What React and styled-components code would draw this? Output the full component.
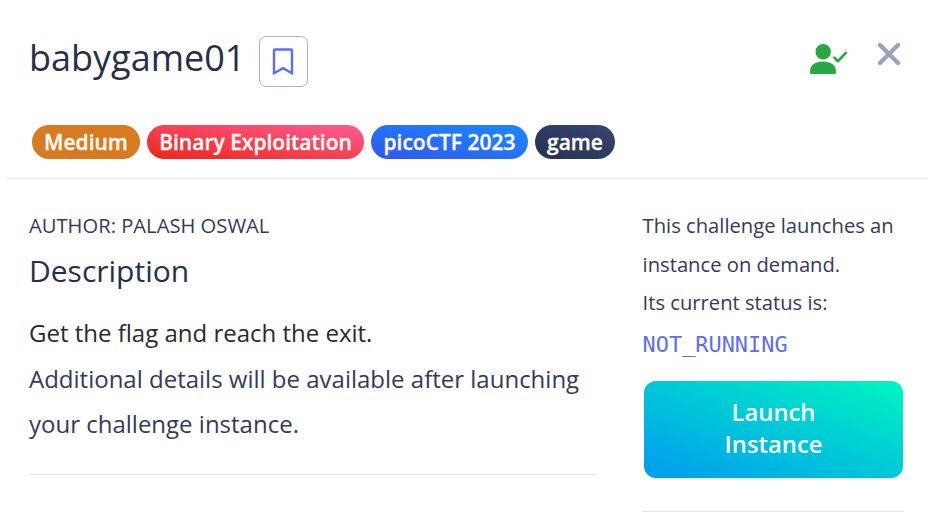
import React from "react";
import styled, { createGlobalStyle } from "styled-components";

const GlobalStyle = createGlobalStyle`
  *, *::before, *::after { box-sizing: border-box; }
  body {
    margin: 0;
    background: #fff;
    color: #333b56;
    font-family: "Open Sans", sans-serif;
    overflow: hidden;
  }
  h1, h2, p { margin: 0; }
`;

const Modal = styled.main`
  width: 933px;
  height: 523px;
  padding: 0 6px;
  overflow: hidden;
`;

const Header = styled.header`
  height: 179px;
  padding: 32px 26px 0 23px;
  border-bottom: 1px solid #e4e9e9;
`;

const TitleRow = styled.div`
  display: flex;
  align-items: flex-start;
  height: 93px;
`;

const Title = styled.h1`
  width: 230px;
  padding-top: 2px;
  font-size: 36px;
  font-weight: 400;
  line-height: 48px;
  color: #282f48;
  white-space: nowrap;
`;

const BookmarkButton = styled.button`
  display: grid;
  place-items: center;
  width: 49px;
  height: 51px;
  margin-top: 4px;
  padding: 0 2px 0 0;
  border: 1px solid #abb3bf;
  border-radius: 7px;
  background: #fff;
`;

const SolvedIcon = styled.svg`
  width: 38px;
  height: 32px;
  margin: 11px 0 0 auto;
`;

const CloseButton = styled.button`
  display: flex;
  margin: 10px 0 0 29px;
  padding: 0;
  border: 0;
  background: none;
`;

const Tags = styled.div`
  display: flex;
  gap: 7px;
  padding-left: 3px;
`;

const Tag = styled.span`
  width: ${(p) => p.$width}px;
  height: 34px;
  border-radius: 17px;
  background: ${(p) => p.$fill};
  color: #fffaf5;
  font-size: 21px;
  font-weight: 600;
  -webkit-text-stroke: 0.35px #fffaf5;
  line-height: 34px;
  text-align: center;
  white-space: nowrap;
`;

const Body = styled.div`
  display: flex;
  justify-content: space-between;
  padding: 27px 23px 0;
`;

const Main = styled.section`
  width: 568px;
`;

const Side = styled.aside`
  width: 262px;
`;

const Author = styled.p`
  font-size: 20.2px;
  line-height: 38px;
  height: 45px;
  white-space: nowrap;
`;

const Heading = styled.h2`
  height: 59px;
  padding-top: 1px;
  font-size: 30px;
  font-weight: 400;
  line-height: 38px;
  color: #282f48;
`;

const Text = styled.p`
  font-size: 24px;
  line-height: 45.5px;
  color: ${(p) => (p.$dark ? "#2a2a2a" : "inherit")};
  white-space: nowrap;
`;

const SideText = styled.p`
  padding: 0.3px 0 0 0.6px;
  font-size: 20.2px;
  line-height: 38.4px;
  white-space: nowrap;
`;

const Status = styled.p`
  height: 59.7px;
  padding: 4px 0 0 0.6px;
  color: #5e6df5;
  font-family: "DejaVu Sans Mono", monospace;
  font-size: 21.9px;
  line-height: 38px;
`;

const LaunchButton = styled.button`
  display: block;
  width: 259px;
  height: 97px;
  margin-left: 2px;
  padding: 0 60px 4px;
  border: 0;
  border-radius: 12px;
  background: linear-gradient(to top right, #009bf0 0%, #00f5c0 100%);
  color: #fff;
  font-family: inherit;
  font-size: 23.8px;
  font-weight: 600;
  line-height: 32px;
`;

const Rule = styled.hr`
  height: 1px;
  margin: ${(p) => p.$top}px 0 0;
  border: 0;
  background: #e3e4e4;
`;

export default function App() {
  return (
    <Modal>
      <GlobalStyle />
      <Header>
        <TitleRow>
          <Title>babygame01</Title>
          <BookmarkButton aria-label="Bookmark">
            <svg width="22" height="28" viewBox="0 0 22 28" fill="none">
              <path d="M2 25.3V2.5Q2 1.5 3 1.5H19Q20 1.5 20 2.5V25.3L11 20.2Z" stroke="#5c6cff" strokeWidth="2.4" />
            </svg>
          </BookmarkButton>
          <SolvedIcon viewBox="0 0 38 32" fill="#28a745">
            <circle cx="13.2" cy="8.7" r="7.7" />
            <path d="M0 28.5C0 22 5 18.5 13 18.5S26 22 26 28.5V29.5Q26 31 24.5 31H1.5Q0 31 0 29.5Z" />
            <path d="M24.4 14.6L28 18.2L35.8 9.9" fill="none" stroke="#28a745" strokeWidth="2.7" strokeLinecap="round" strokeLinejoin="round" />
          </SolvedIcon>
          <CloseButton aria-label="Close">
            <svg width="24" height="24" viewBox="0 0 24 24">
              <path d="M3 3L21 21M21 3L3 21" stroke="#9ba2bd" strokeWidth="4.4" strokeLinecap="round" />
            </svg>
          </CloseButton>
        </TitleRow>
        <Tags>
          <Tag $width={108} $fill="#d87a20">Medium</Tag>
          <Tag $width={217} $fill="linear-gradient(to top right, #ee2617, #ff5c93)">Binary Exploitation</Tag>
          <Tag $width={157} $fill="linear-gradient(to top right, #3156f4, #198afc)">picoCTF 2023</Tag>
          <Tag $width={80} $fill="linear-gradient(to top right, #25324e, #364574)">game</Tag>
        </Tags>
      </Header>
      <Body>
        <Main>
          <Author>AUTHOR: PALASH OSWAL</Author>
          <Heading>Description</Heading>
          <Text $dark>Get the flag and reach the exit.</Text>
          <Text>
            Additional details will be available after launching
            <br />
            your challenge instance.
          </Text>
          <Rule $top={27.5} />
        </Main>
        <Side>
          <SideText>
            This challenge launches an
            <br />
            instance on demand.
            <br />
            Its current status is:
          </SideText>
          <Status>NOT_RUNNING</Status>
          <LaunchButton>Launch Instance</LaunchButton>
          <Rule $top={33} />
        </Side>
      </Body>
    </Modal>
  );
}
